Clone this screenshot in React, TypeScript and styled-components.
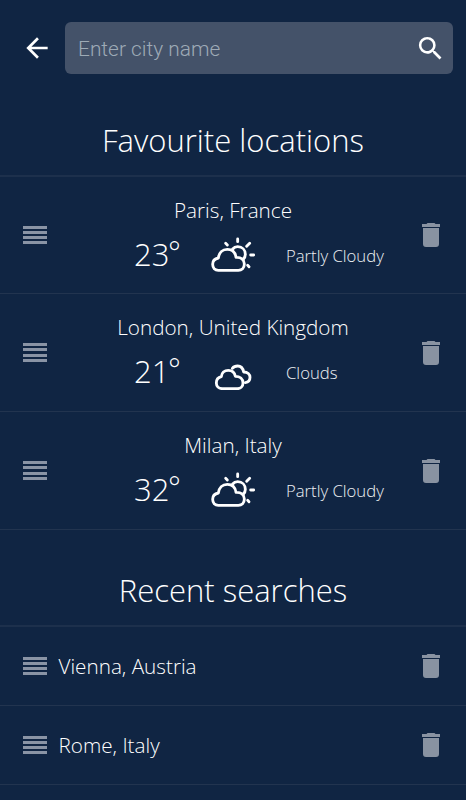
import React from 'react';
import styled, { createGlobalStyle } from 'styled-components';
import { MdArrowBack, MdSearch } from 'react-icons/md';

const GlobalStyle = createGlobalStyle`
  * { box-sizing: border-box; }
  html, body { margin: 0; background: #102543; }
  body { font-family: 'Open Sans', sans-serif; font-weight: 300; color: #fff; overflow: hidden; }
  button { border: 0; padding: 0; background: none; color: inherit; display: flex; }
`;

const Screen = styled.main`
  width: 466px;
  height: 800px;
  overflow: hidden;
  background: #102543;
`;

const TopBar = styled.header`
  display: flex;
  align-items: center;
  height: 96px;
  padding: 0 13px 0 24px;
`;

const BackButton = styled.button`
  width: 41px;
  svg { width: 32px; height: 32px; margin-left: -3px; }
`;

const SearchBox = styled.div`
  flex: 1;
  display: flex;
  align-items: center;
  height: 52px;
  padding: 0 7px 0 13px;
  border-radius: 6px;
  background: #445269;
`;

const SearchInput = styled.input`
  flex: 1;
  min-width: 0;
  padding: 2px 0 0;
  border: 0;
  outline: 0;
  background: transparent;
  color: #fff;
  font: 350 20.9px Roboto, sans-serif;
  &::placeholder { color: #9eaab6; opacity: 1; }
`;

const SearchButton = styled.button`
  svg { width: 31px; height: 31px; }
`;

const SectionTitle = styled.h2<{ $height: number }>`
  height: ${(p) => p.$height}px;
  margin: 0;
  padding-bottom: 13px;
  border-bottom: 2px solid #1d304c;
  display: flex;
  align-items: flex-end;
  justify-content: center;
  font-size: 31px;
  line-height: 44px;
  font-weight: 300;
`;

const Row = styled.article<{ $height: number }>`
  display: grid;
  grid-template-columns: 58px 1fr 58px;
  align-items: center;
  height: ${(p) => p.$height}px;
  border-bottom: 1.5px solid #22344f;
`;

const Handle = styled.div`
  display: flex;
  flex-direction: column;
  gap: 2.3px;
  width: 24px;
  margin-left: 23px;
`;

const Bar = styled.span`
  height: 3px;
  background: #8a94a5;
`;

const DeleteButton = styled.button`
  justify-self: start;
  margin-left: 14px;
`;

const Details = styled.div`
  display: flex;
  flex-direction: column;
  height: 100%;
  padding-top: 18px;
`;

const City = styled.div`
  font-size: 20.7px;
  line-height: 31px;
  text-align: center;
`;

const RecentCity = styled.div`
  padding-left: 0.5px;
  font-size: 20.7px;
  line-height: 30px;
`;

const Weather = styled.div`
  display: grid;
  grid-template-columns: 76px 76px 1fr;
  align-items: center;
  height: 58px;
  padding-left: 76px;
`;

const Temperature = styled.span`
  display: flex;
  align-items: flex-start;
  padding-bottom: 2px;
  font-size: 31px;
  line-height: 44px;
`;

const Degree = styled.span`
  margin-left: -1.5px;
  font-size: 30px;
  line-height: 40px;
`;

const Condition = styled.span`
  padding-top: 2px;
  font-size: 16.7px;
  line-height: 24px;
  color: #edf0f3;
`;

const WeatherIcon = styled.svg`
  width: 48px;
  height: 36px;
  fill: none;
  stroke: #fff;
  stroke-width: 8.5;
  stroke-linecap: round;
  stroke-linejoin: round;
`;

type Sky = 'Partly Cloudy' | 'Clouds';

const SkyIcon = ({ sky }: { sky: Sky }) =>
  sky === 'Clouds' ? (
    <WeatherIcon viewBox="0 0 144 108">
      <path d="M37 104C26 104 19 96 19 87C19 77 25 70 34 68C35 57 43 49 55 49C67 49 74 56 76 67C90 67 99 75 99 87C99 97 92 104 82 104Z" />
      <path d="M67 43C71 38 76 36 83 36C93 36 99 44 101 54C113 54 120 61 120 70C120 79 114 85 106 86" />
    </WeatherIcon>
  ) : (
    <WeatherIcon viewBox="0 0 144 108">
      <path d="M25 100C15 100 8 93 8 82C8 71 15 65 25 63C27 48 37 37 52 37C67 37 76 47 78 61C93 60 103 68 103 81C103 93 95 100 85 100Z" />
      <path d="M68 36C72 31 77 29 83 29C97 29 106 39 106 52C106 58 104 63 100 67M83 6V14M47 19L52 24M110 28L119 19M122 54H131M113 85L117 89" />
    </WeatherIcon>
  );

const DragHandle = () => <Handle><Bar /><Bar /><Bar /><Bar /></Handle>;

const Trash = () => (
  <DeleteButton aria-label="Remove">
    <svg width="18" height="24" viewBox="0 0 18 24" fill="#8993a2">
      <path d="M0 1H4.5L5.5 0H12.5L13.5 1H18V4H0ZM1 5H17V21Q17 24 14 24H4Q1 24 1 21Z" />
    </svg>
  </DeleteButton>
);

const favourites: { city: string; temp: number; sky: Sky; height: number }[] = [
  { city: 'Paris, France', temp: 23, sky: 'Partly Cloudy', height: 117 },
  { city: 'London, United Kingdom', temp: 21, sky: 'Clouds', height: 118 },
  { city: 'Milan, Italy', temp: 32, sky: 'Partly Cloudy', height: 118 },
];

export default function App() {
  return (
    <Screen>
      <GlobalStyle />
      <TopBar>
        <BackButton aria-label="Back"><MdArrowBack /></BackButton>
        <SearchBox>
          <SearchInput placeholder="Enter city name" />
          <SearchButton aria-label="Search"><MdSearch /></SearchButton>
        </SearchBox>
      </TopBar>
      <SectionTitle $height={81}>Favourite locations</SectionTitle>
      {favourites.map((f) => (
        <Row key={f.city} $height={f.height}>
          <DragHandle />
          <Details>
            <City>{f.city}</City>
            <Weather>
              <Temperature>{f.temp}<Degree>°</Degree></Temperature>
              <SkyIcon sky={f.sky} />
              <Condition>{f.sky}</Condition>
            </Weather>
          </Details>
          <Trash />
        </Row>
      ))}
      <SectionTitle $height={97}>Recent searches</SectionTitle>
      {['Vienna, Austria', 'Rome, Italy'].map((city) => (
        <Row key={city} $height={79}>
          <DragHandle />
          <RecentCity>{city}</RecentCity>
          <Trash />
        </Row>
      ))}
    </Screen>
  );
}
